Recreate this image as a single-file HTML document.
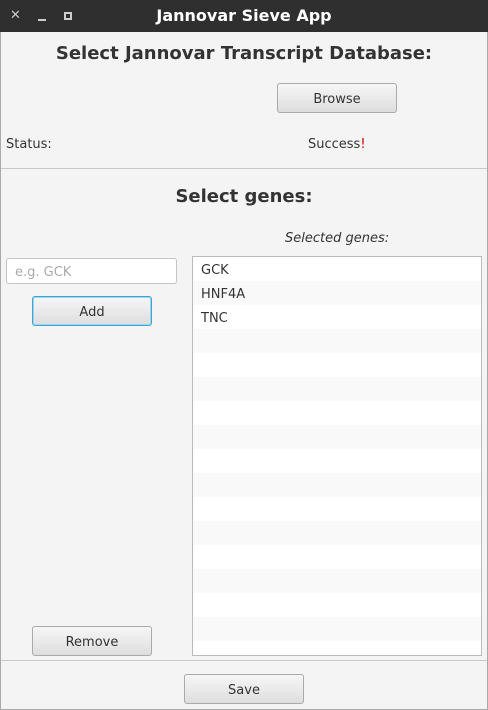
<!DOCTYPE html>
<html><head><style>
*{margin:0;padding:0;box-sizing:border-box}
body{width:488px;height:710px;background:#f4f4f4;font-family:"DejaVu Sans","Liberation Sans",sans-serif;color:#333;position:relative;overflow:hidden;font-size:13px}
.abs{position:absolute}
.tb{left:0;top:0;width:488px;height:32px;background:#2f2f2f;color:#fff;font-weight:bold;font-size:16px;text-align:center;line-height:32px}
.frame{left:0;top:32px;width:488px;height:678px;border-left:1px solid #aaa;border-right:1px solid #aaa;border-bottom:1px solid #aaa}
.btn{border:1px solid #aaa;border-radius:3px;background:linear-gradient(#f6f6f6,#dedede);text-align:center;font-size:13px;color:#333;line-height:32px}
h1{font-size:18px;font-weight:bold;text-align:center;width:488px;left:0}
.row{height:24px;line-height:28px;padding-left:8px;font-size:13px}
</style></head><body>
<div class="abs tb">Jannovar Sieve App</div>
<div class="abs" style="left:10px;top:8px;color:#ccc;font-size:13px;font-weight:bold">✕</div>
<div class="abs" style="left:38px;top:19px;width:8px;height:2px;background:#ccc"></div>
<div class="abs" style="left:64px;top:12px;width:8px;height:8px;border:2px solid #ccc"></div>
<div class="abs frame"></div>
<h1 class="abs" style="top:43px">Select Jannovar Transcript Database:</h1>
<div class="abs btn" style="left:277px;top:83px;width:120px;height:30px">Browse</div>
<div class="abs" style="left:6px;top:137px">Status:</div>
<div class="abs" style="left:308px;top:137px">Success<span style="color:#c00">!</span></div>
<div class="abs" style="left:1px;top:168px;width:486px;height:1px;background:#c8c8c8"></div>
<h1 class="abs" style="top:186px">Select genes:</h1>
<div class="abs" style="left:285px;top:231px;font-style:italic">Selected genes:</div>
<div class="abs" style="left:6px;top:258px;width:171px;height:26px;border:1px solid #c4c4c4;border-radius:3px;background:#fff;color:#aaa;line-height:27px;padding-left:8px">e.g. GCK</div>
<div class="abs btn" style="left:32px;top:296px;width:120px;height:30px;border-color:#39a6d6;box-shadow:inset 0 0 0 1px #9fd4ec">Add</div>
<div class="abs" style="left:192px;top:256px;width:290px;height:400px;border:1px solid #bbb;background:#fff;overflow:hidden">
<div class="row" style="background:#fff">GCK</div>
<div class="row" style="background:#f9f9f9">HNF4A</div>
<div class="row" style="background:#fff">TNC</div>
<div class="row" style="background:#f9f9f9"></div><div class="row"></div>
<div class="row" style="background:#f9f9f9"></div><div class="row"></div>
<div class="row" style="background:#f9f9f9"></div><div class="row"></div>
<div class="row" style="background:#f9f9f9"></div><div class="row"></div>
<div class="row" style="background:#f9f9f9"></div><div class="row"></div>
<div class="row" style="background:#f9f9f9"></div><div class="row"></div>
<div class="row" style="background:#f9f9f9"></div><div class="row"></div>
</div>
<div class="abs btn" style="left:32px;top:626px;width:120px;height:30px">Remove</div>
<div class="abs" style="left:1px;top:660px;width:486px;height:1px;background:#c8c8c8"></div>
<div class="abs btn" style="left:184px;top:674px;width:120px;height:30px">Save</div>
</body></html>
